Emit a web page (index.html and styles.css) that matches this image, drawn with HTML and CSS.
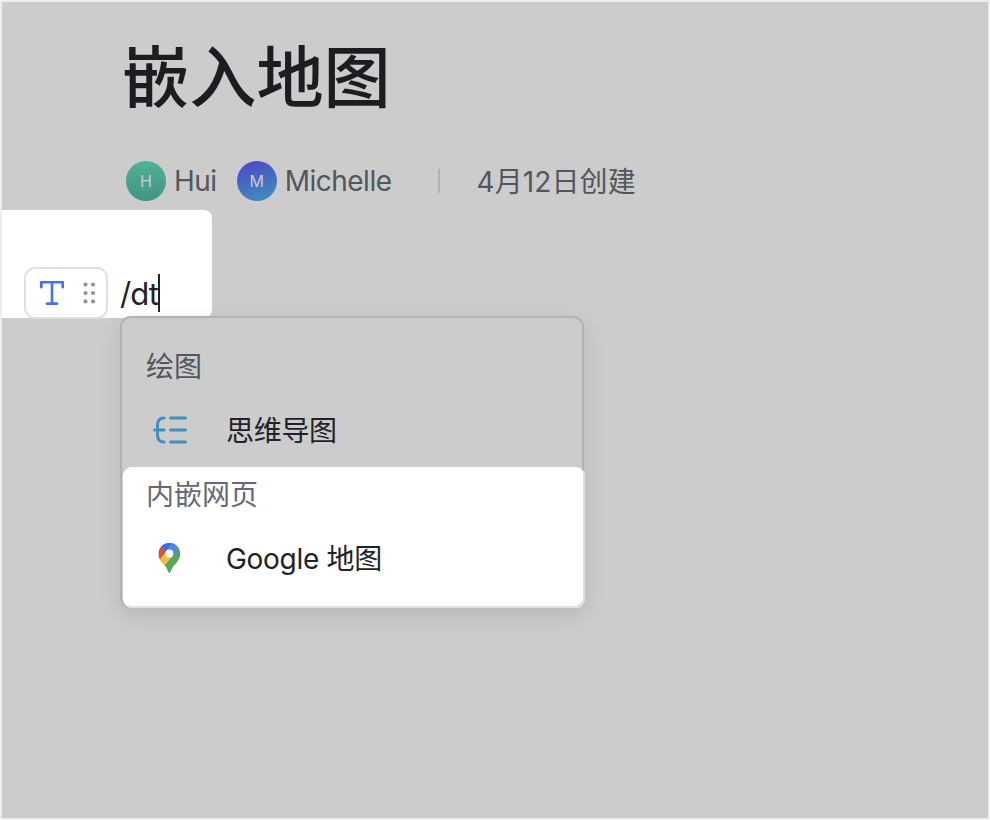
FILE: index.html
```
<!DOCTYPE html>
<html lang="zh-CN">
<head>
    <meta charset="UTF-8">
    <meta name="viewport" content="width=device-width, initial-scale=1.0">
    <title>嵌入地图</title>
    <link rel="stylesheet" href="styles.css">
</head>
<body>
    <main class="page">
        <h1>嵌入地图</h1>
        <div class="meta">
            <span class="avatar avatar-green">H</span>
            <span class="name">Hui</span>
            <span class="avatar avatar-blue">M</span>
            <span class="name">Michelle</span>
            <span class="divider"></span>
            <span class="date">4月12日创建</span>
        </div>

        <!-- Current line with the block handle -->
        <div class="line">
            <div class="handle">
                <svg class="text-icon" width="24" height="24" viewBox="0 0 24 24">
                    <path d="M1.3 6.2V1.3H22.7V6.2M12 1.3V22.6M7 22.6H17" fill="none" stroke="#4770ef" stroke-width="2.6" stroke-linecap="round" stroke-linejoin="round"/>
                </svg>
                <svg class="grip-icon" width="14" height="22" viewBox="0 0 14 22" fill="#8f959e">
                    <circle cx="3.5" cy="2.6" r="2.1"/><circle cx="11" cy="2.6" r="2.1"/>
                    <circle cx="3.5" cy="11" r="2.1"/><circle cx="11" cy="11" r="2.1"/>
                    <circle cx="3.5" cy="19.4" r="2.1"/><circle cx="11" cy="19.4" r="2.1"/>
                </svg>
            </div>
            <span class="command">/dt</span>
            <span class="caret"></span>
        </div>

        <!-- Slash command menu -->
        <div class="menu">
            <div class="group">
                <div class="group-title">绘图</div>
                <div class="item">
                    <svg class="item-icon" width="34" height="28" viewBox="0 0 34 28" fill="none" stroke="#428fbe" stroke-width="3" stroke-linecap="round">
                        <path d="M11 2C6.5 2 4.5 5 4.5 9V19C4.5 23 6.5 26 11 26M1.5 14H11M17.5 2H32.5M17.5 14H32.5M17.5 26H32.5"/>
                    </svg>
                    <span class="item-label">思维导图</span>
                </div>
            </div>
            <div class="group group-active">
                <div class="group-title">内嵌网页</div>
                <div class="item">
                    <svg class="item-icon" width="34" height="32" viewBox="-0.4 0 34 32">
                        <defs>
                            <clipPath id="pin">
                                <path d="M16 1C9.9 1 5.2 5.8 5.2 11.7C5.2 17.8 8.8 20.3 12.2 24.5C14.2 27 14.6 31 16 31S17.8 27 19.8 24.5C23.2 20.3 26.8 17.8 26.8 11.7C26.8 5.8 22.1 1 16 1Z"/>
                            </clipPath>
                        </defs>
                        <g clip-path="url(#pin)">
                            <path d="M0 0H34V32H0Z" fill="#58a65c"/>
                            <path d="M0 24L6 18L13.2 8.7L19.2 14.2L8.5 26.8H0Z" fill="#f2bd42"/>
                            <path d="M0 0H6L13.2 8.7L5.5 18H0Z" fill="#d85140"/>
                            <path d="M7.7 4.8L13 9L20 0H5Z" fill="#3871e0"/>
                            <path d="M19.7 0L12.6 9L18.8 14.4L29 2V0Z" fill="#5383ec"/>
                        </g>
                        <circle cx="16" cy="11.6" r="4" fill="#fff"/>
                    </svg>
                    <span class="item-label">Google 地图</span>
                </div>
            </div>
        </div>
    </main>
</body>
</html>
```

FILE: styles.css
```
* {
    box-sizing: border-box;
}
body {
    margin: 0;
    font-family: Inter, "Noto Sans CJK SC", sans-serif;
    font-size: 28px;
    color: #1f2329;
}
.page {
    height: 820px;
    border: 2px solid #eee;
    background-color: #ccc;
    overflow: hidden;
}
h1 {
    margin: 28px 0 0 120px;
    height: 96px;
    line-height: 96px;
    font-size: 67.2px;
    font-weight: 500;
    color: #1c1d21;
}
.meta {
    display: flex;
    align-items: center;
    height: 40px;
    margin: 35px 0 9px 124px;
    color: #53565d;
}
.avatar {
    width: 40px;
    height: 40px;
    border-radius: 50%;
    line-height: 40px;
    text-align: center;
    font-size: 16px;
    color: #ccc;
}
.avatar-green {
    background: linear-gradient(#50b09b, #43947f);
}
.avatar-blue {
    margin-left: 20px;
    background: linear-gradient(160deg, #4a50c4 15%, #4189bd 85%);
}
.name {
    margin-left: 8px;
    letter-spacing: -0.5px;
}
.divider {
    width: 2px;
    height: 24px;
    margin: 0 37px 0 46px;
    background-color: #b0b1b4;
}
.date {
    padding-bottom: 3px;
    letter-spacing: 0.1px;
}

/* Editing line */
.line {
    display: flex;
    width: 210px;
    height: 108px;
    padding: 57px 0 0 22px;
    border-radius: 0 8px 8px 0;
    background-color: #fff;
}
.handle {
    display: flex;
    align-items: center;
    width: 84px;
    height: 52px;
    padding-left: 14px;
    border: 2px solid #dee0e3;
    border-radius: 11px;
    background-color: #fff;
}
.grip-icon {
    margin-left: 18px;
}
.command {
    margin-left: 12px;
    line-height: 54px;
    font-size: 31px;
    letter-spacing: -0.9px;
}
.caret {
    width: 2px;
    height: 38px;
    margin-top: 7px;
    background-color: #1f2329;
}

/* Menu */
.menu {
    width: 464px;
    height: 292px;
    margin: -2px 0 0 118px;
    border: 2px solid #b1b2b6;
    border-radius: 11px;
    background-color: #ccc;
    box-shadow: 0 8px 20px rgba(31, 45, 41, 0.12);
}
.group {
    height: 149px;
    padding: 29px 0 0 24px;
}
.group-title {
    height: 40px;
    line-height: 40px;
    color: #53565d;
}
.item {
    display: flex;
    align-items: center;
    height: 40px;
    margin-top: 23px;
    padding-left: 7px;
}
.item-icon {
    margin-right: 39px;
}
.item-label {
    padding-bottom: 2px;
    letter-spacing: -0.3px;
}
.group-active {
    width: 462px;
    height: 141px;
    margin-left: 1px;
    padding: 8px 0 0 23px;
    border-radius: 9px;
    background-color: #fff;
    box-shadow: inset -2px -2px 0 #dee0e3;
}
.group-active .group-title {
    color: #646a73;
}
```
